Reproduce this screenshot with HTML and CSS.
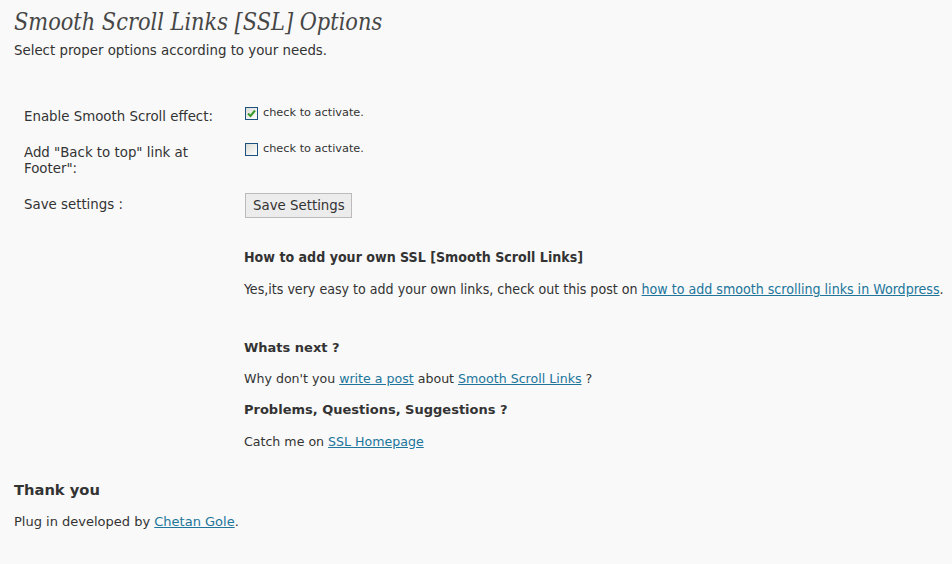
FILE: index.html
```html
<!DOCTYPE html>
<html>
<head>
<meta charset="utf-8">
<link rel="stylesheet" href="styles.css">
</head>
<body>
<div class="wrap">
  <h2 class="title">Smooth Scroll Links [SSL] Options</h2>
  <p class="intro">Select proper options according to your needs.</p>

  <div class="form">
    <div class="row r1">
      <div class="label">Enable Smooth Scroll effect:</div>
      <div class="value">
        <span class="cb checked"><svg width="9" height="9" viewBox="0 0 9 9"><path d="M1 4.5 L3.5 7 L8 1.5" fill="none" stroke="#3a9a2a" stroke-width="2"/></svg></span>
        <span class="hint">check to activate.</span>
      </div>
    </div>
    <div class="row r2">
      <div class="label">Add "Back to top" link at Footer":</div>
      <div class="value">
        <span class="cb"></span>
        <span class="hint">check to activate.</span>
      </div>
    </div>
    <div class="row r3">
      <div class="label">Save settings :</div>
      <div class="value">
        <button class="btn">Save Settings</button>
      </div>
    </div>
  </div>

  <div class="info">
    <h4 class="tah">How to add your own SSL [Smooth Scroll Links]</h4>
    <p class="tah p-yes">Yes,its very easy to add your own links, check out this post on <a href="#">how to add smooth scrolling links in Wordpress</a>.</p>
    <h4 class="h-next">Whats next ?</h4>
    <p>Why don't you <a href="#">write a post</a> about <a href="#">Smooth Scroll Links</a> ?</p>
    <h4>Problems, Questions, Suggestions ?</h4>
    <p>Catch me on <a href="#">SSL Homepage</a></p>
  </div>

  <h3 class="thanks">Thank you</h3>
  <p class="credit">Plug in developed by <a href="#">Chetan Gole</a>.</p>
</div>
</body>
</html>
```

FILE: styles.css
```css
html, body {
  margin: 0;
  padding: 0;
  background: #f9f9f9;
}
body {
  font-family: "DejaVu Sans", Verdana, sans-serif;
  font-size: 13px;
  color: #333;
}
.wrap {
  padding: 0 0 0 14px;
}
.title {
  font-family: "DejaVu Serif Condensed", "DejaVu Serif", Georgia, serif;
  font-style: italic;
  font-weight: normal;
  font-size: 23.25px;
  color: #464646;
  margin: 0;
  padding-top: 8px;
  line-height: 28px;
}
.intro {
  margin: 6px 0 0;
  line-height: 18px;
  font-size: 13.35px;
}
.form {
  margin-top: 45px;
  padding-left: 10px;
  display: flex;
  flex-direction: column;
}
.row {
  display: grid;
  grid-template-columns: 221px 1fr;
}
.label {
  width: 200px;
  line-height: 16px;
  padding-top: 4px;
  font-size: 13.35px;
}
.value {
  display: flex;
  align-items: flex-start;
  gap: 5px;
  padding-top: 2px;
}
.r1 { height: 36px; }
.r2 { height: 52px; }
.r3 .value { padding-top: 0; }
.cb {
  box-sizing: border-box;
  width: 13px;
  height: 13px;
  border: 1px solid #1c5180;
  background: linear-gradient(135deg, #dcdcd6, #fff);
  display: flex;
  align-items: center;
  justify-content: center;
}
.cb svg { display: block; }
.hint {
  font-family: "DejaVu Sans", Tahoma, sans-serif;
  font-size: 11.3px;
  line-height: 12px;
}
.btn {
  font-family: "DejaVu Sans", Verdana, sans-serif;
  font-size: 13.35px;
  color: #333;
  background: #ececec;
  border: 1px solid #bbb;
  border-radius: 0;
  padding: 0 6px 0 7px;
  height: 25px;
  margin: 0;
}
.info {
  margin-left: 230px;
  margin-top: 30px;
}
.info h4 {
  margin: 13px 0 0;
  font-size: 13px;
  font-weight: bold;
  line-height: 18px;
}
.info h4:first-child { margin-top: 0; }
.info p {
  margin: 13px 0 0;
  line-height: 18px;
  font-size: 12.6px;
}
.info .p-yes { margin-top: 14px; }
.info .h-next { margin-top: 41px; }
.info p:last-child { margin-top: 14px; }
.info .tah {
  font-family: "DejaVu Sans Condensed", Tahoma, sans-serif;
  font-size: 14.08px;
}
a {
  color: #21759b;
}
.thanks {
  margin: 29px 0 0;
  font-size: 14.7px;
  font-weight: bold;
  line-height: 20px;
}
.credit {
  margin: 13px 0 0;
  line-height: 18px;
}
```
